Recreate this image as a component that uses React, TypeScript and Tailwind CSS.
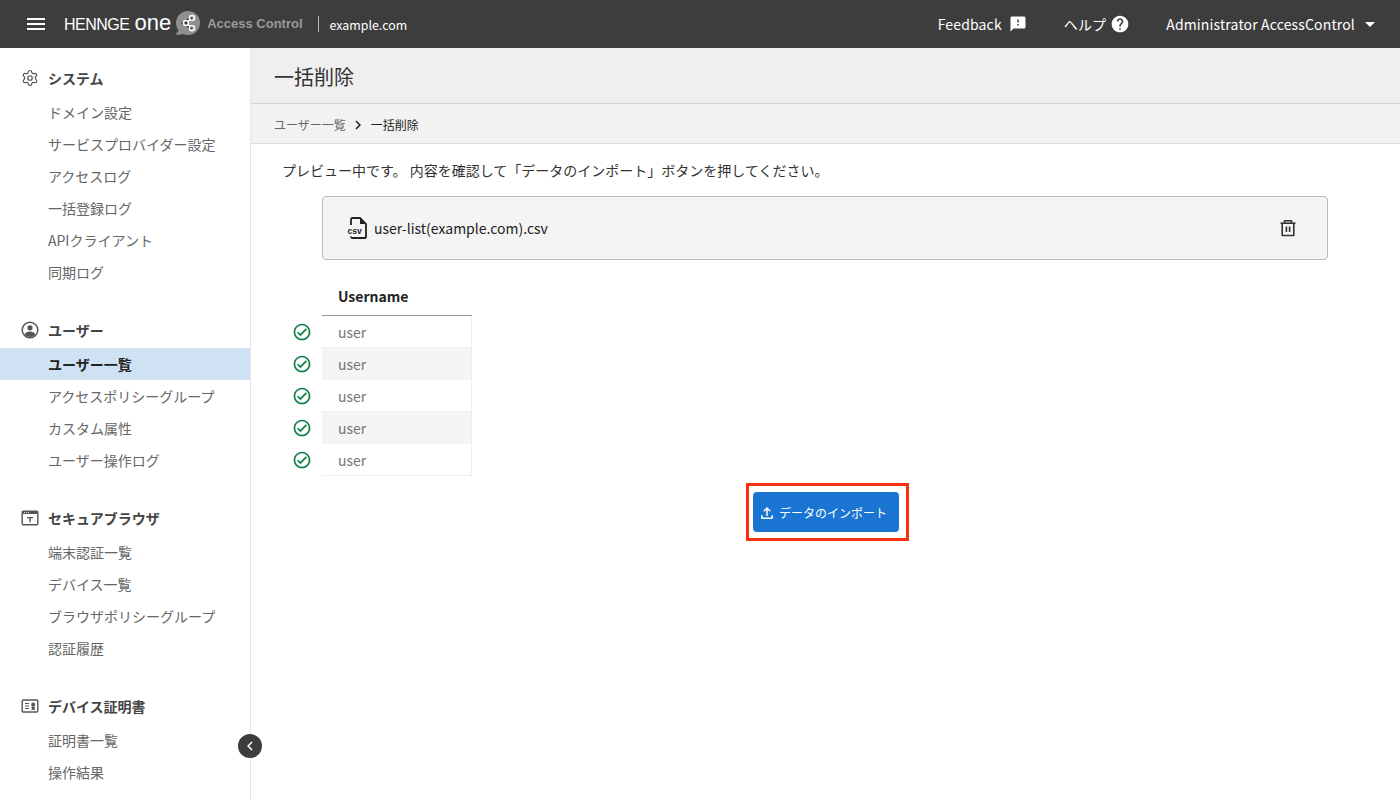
import { MdMenu, MdFeedback, MdHelp, MdArrowDropDown, MdChevronLeft, MdChevronRight, MdOutlineCheckCircle, MdOutlineFileUpload } from 'react-icons/md';
import { Settings } from 'lucide-react';

const cjk = { fontFamily: '"Noto Sans CJK JP", "Noto Sans", sans-serif' };

const UserIcon = () => (
    <svg width="18" height="18" viewBox="0 0 18 18" fill="none" className="text-[#555]">
        <circle cx="9" cy="9" r="7.8" stroke="currentColor" strokeWidth="1.5" />
        <circle cx="9" cy="6.8" r="2.6" fill="currentColor" />
        <path d="M3.4 13.6c1.2-2 3.3-3 5.6-3s4.400 1 5.600 3c-1.400 1.500-3.400 2.400-5.600 2.400s-4.200-.9-5.600-2.400z" fill="currentColor" />
    </svg>
);

const BrowserIcon = () => (
    <svg width="18" height="18" viewBox="0 0 18 18" fill="none" className="text-[#555]">
        <rect x="1.2" y="2.200" width="15.600" height="13.600" rx="1" stroke="currentColor" strokeWidth="1.400" />
        <rect x="1.200" y="2.200" width="15.600" height="2.800" fill="currentColor" />
        <path d="M3 3.600h1M5 3.600h1M7 3.600h1" stroke="#fff" strokeWidth="0.9" />
        <path d="M6 8h6v1.200H9.700v4H8.300v-4H6z" fill="currentColor" />
    </svg>
);

const CertIcon = () => (
    <svg width="18" height="18" viewBox="0 0 18 18" fill="none" className="text-[#555]">
        <rect x="1.200" y="3" width="15.600" height="12" rx="1" stroke="currentColor" strokeWidth="1.400" />
        <path d="M4 6.500h4M4 9h4M4 11.500h4" stroke="currentColor" strokeWidth="1.200" />
        <circle cx="12.200" cy="7.600" r="2" fill="currentColor" />
        <path d="M10.600 9.500h3.200v4l-1.600-1-1.600 1z" fill="currentColor" />
    </svg>
);

const LogoMark = () => (
    <svg width="26" height="26" viewBox="0 0 26 26">
        <circle cx="14" cy="12" r="12" fill="#8f8f8f" />
        <path d="M5 19l-3.500 4.500c3 .8 6.500.2 8.500-1.500z" fill="#8f8f8f" />
        <path d="M18 7l-8 5 8 5.200" fill="none" stroke="#3d3d3d" strokeWidth="3.600" />
        <circle cx="18" cy="7" r="2.500" fill="none" stroke="#fff" strokeWidth="1.600" />
        <circle cx="12" cy="12" r="2.500" fill="none" stroke="#fff" strokeWidth="1.600" />
        <circle cx="18" cy="17.200" r="2.500" fill="none" stroke="#fff" strokeWidth="1.600" />
        <path d="M14 10.600l2-1.700M14 13.400l2 2" stroke="#fff" strokeWidth="1.600" />
    </svg>
);

const TrashIcon = () => (
    <svg width="18" height="18" viewBox="0 0 18 18" fill="none" className="text-[#333]">
        <path d="M1.500 4.200h15" stroke="currentColor" strokeWidth="1.600" />
        <path d="M5.500 4V1.800h7V4" stroke="currentColor" strokeWidth="1.400" />
        <path d="M3.200 4.200v12.300h11.600V4.200" stroke="currentColor" strokeWidth="1.600" />
        <path d="M7.400 7.500v5.500M10.600 7.500v5.500" stroke="currentColor" strokeWidth="1.600" />
    </svg>
);

const CsvIcon = () => (
    <svg width="20" height="22" viewBox="0 0 20 22" fill="none" className="text-[#222]">
        <path d="M4 8V3c0-1 .6-2 1.500-2H13l6 6v13c0 .6-.5 1-1 1H5.500C4.600 21 4 20.300 4 19.500" stroke="currentColor" strokeWidth="1.800" />
        <path d="M13 1.500V7h5.500" fill="currentColor" />
        <rect x="0" y="8.500" width="15" height="9" fill="#f4f4f4" />
        <text x="0.500" y="16.500" fontSize="8.500" fontWeight="700" fill="currentColor" fontFamily="Liberation Sans, sans-serif">csv</text>
    </svg>
);

const sections = [
    { title: 'システム', icon: <Settings size={18} strokeWidth={1.6} className="text-[#555]" />, items: ['ドメイン設定', 'サービスプロバイダー設定', 'アクセスログ', '一括登録ログ', 'APIクライアント', '同期ログ'] },
    { title: 'ユーザー', icon: <UserIcon />, items: ['ユーザー一覧', 'アクセスポリシーグループ', 'カスタム属性', 'ユーザー操作ログ'] },
    { title: 'セキュアブラウザ', icon: <BrowserIcon />, items: ['端末認証一覧', 'デバイス一覧', 'ブラウザポリシーグループ', '認証履歴'] },
    { title: 'デバイス証明書', icon: <CertIcon />, items: ['証明書一覧', '操作結果'] },
];

export default function App() {
    return (
        <div className="h-[800px] w-[1400px] overflow-hidden bg-white flex flex-col relative" style={cjk}>
            {/* Header */}
            <header className="h-12 shrink-0 bg-[#3d3d3d] flex items-center text-white">
                <MdMenu size={24} className="ml-6 text-white" />
                <div className="ml-[16px] flex items-baseline whitespace-nowrap leading-none" style={{ fontFamily: '"Liberation Sans", sans-serif' }}>
                    <span className="text-base tracking-[-0.5px]">HENNGE</span>
                    <span className="ml-[5px] text-[22px]">one</span>
                </div>
                <span className="ml-[3px] flex"><LogoMark /></span>
                <span className="ml-[7px] text-[13px] font-bold text-[#9a9a9a] whitespace-nowrap" style={{ fontFamily: '"Liberation Sans", sans-serif' }}>Access Control</span>
                <span className="ml-[15px] h-4 w-px bg-[#bbb]" />
                <span className="ml-[11px] text-[12.4px] pt-[2px]">example.com</span>
                <div className="ml-auto flex items-center text-sm tracking-[0.15px] mr-[23px]">
                    <span>Feedback</span>
                    <MdFeedback size={18} className="ml-[7px]" />
                    <span className="ml-[37px]">ヘルプ</span>
                    <MdHelp size={20} className="ml-[4px]" />
                    <span className="ml-[36px]">Administrator AccessControl</span>
                    <MdArrowDropDown size={24} className="ml-[3px] -mr-[5px]" />
                </div>
            </header>

            <div className="flex flex-1 min-h-0">
                {/* Sidebar */}
                <aside className="w-[251px] shrink-0 border-r border-[#e6e6e6] pt-[14px] overflow-hidden">
                    {sections.map((s) => (
                        <div key={s.title} className="mb-[26px]">
                            <div className="h-8 mb-[2px] pb-[1px] flex items-center pl-[21px] gap-[9px] text-sm font-bold text-[#444]">
                                <span className="w-[18px] flex justify-center">{s.icon}</span>
                                {s.title}
                            </div>
                            {s.items.map((item) => (
                                <div
                                    key={item}
                                    className={`h-8 pb-[1px] flex items-center pl-12 text-sm ${item === 'ユーザー一覧' ? 'bg-[#cfe2f4] font-bold text-[#222]' : 'text-[#666]'}`}
                                >
                                    {item}
                                </div>
                            ))}
                        </div>
                    ))}
                </aside>

                {/* Main */}
                <main className="flex-1 min-w-0">
                    <div className="h-[56px] pt-[2px] bg-[#efefef] border-b border-[#d4d4d4] flex items-center pl-[23px] text-xl text-[#333]">一括削除</div>
                    <div className="h-10 pt-[2px] bg-[#f2f2f2] border-b border-[#dedede] flex items-center pl-[23px] text-xs">
                        <span className="text-[#666]">ユーザー一覧</span>
                        <MdChevronRight size={18} className="ml-[3px] mr-[4px] text-[#222]" />
                        <span className="text-[#222]">一括削除</span>
                    </div>

                    <p className="mt-[15px] ml-[31px] text-sm leading-[22px] text-[#333]">プレビュー中です。 内容を確認して「データのインポート」ボタンを押してください。</p>

                    <div className="mt-[15px] ml-[71px] w-[1006px] h-16 bg-[#f4f4f4] border border-[#bbb] rounded-[4px] flex items-center pl-[24px] pr-[30px]">
                        <CsvIcon />
                        <span className="ml-[7px] text-sm text-[#222]">user-list(example.com).csv</span>
                        <span className="ml-auto flex"><TrashIcon /></span>
                    </div>

                    <div className="mt-[21px] ml-[41px] flex">
                        <div className="w-[30px] pt-[35px]">
                            {[0, 1, 2, 3, 4].map((i) => (
                                <div key={i} className="h-8 flex items-center justify-start">
                                    <MdOutlineCheckCircle size={20} className="text-[#0a8043]" />
                                </div>
                            ))}
                        </div>
                        <div className="w-[150px]">
                            <div className="h-[35px] pb-1 border-b border-[#999] pl-4 flex items-center text-sm font-bold text-[#222]">Username</div>
                            {[0, 1, 2, 3, 4].map((i) => (
                                <div key={i} className={`h-8 pl-4 flex items-center text-sm text-[#777] border-b border-r border-[#f0f0f0] ${i % 2 === 1 ? 'bg-[#f5f5f5]' : 'bg-white'}`}>user</div>
                            ))}
                        </div>
                    </div>

                    <div className="mt-[7px] flex justify-center">
                        <div className="ml-1 border-[3px] border-[#f5300f] pl-1 pr-[7px] py-[6px]">
                            <button className="w-[146px] h-10 pt-[1px] bg-[#1a75d2] rounded-[4px] text-white text-xs flex items-center justify-start pl-[5px] gap-[3px]">
                                <MdOutlineFileUpload size={18} />
                                データのインポート
                            </button>
                        </div>
                    </div>
                </main>
            </div>

            {/* Sidebar collapse */}
            <button className="absolute left-[238px] top-[734px] w-6 h-6 rounded-full bg-[#3d3d3d] text-white flex items-center justify-center">
                <MdChevronLeft size={18} />
            </button>
        </div>
    );
}
